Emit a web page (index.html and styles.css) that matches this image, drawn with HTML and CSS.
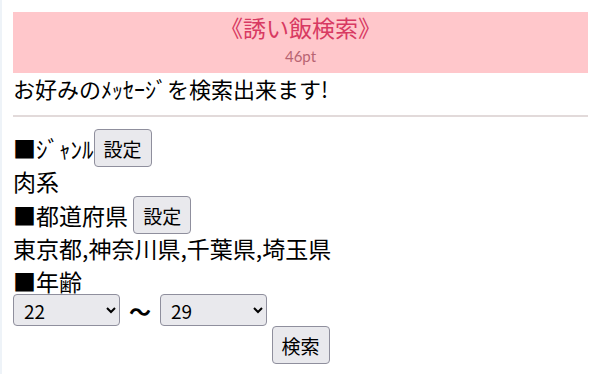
FILE: index.html
```html
<!DOCTYPE html>
<html lang="ja">
<head>
    <meta charset="UTF-8">
    <meta name="viewport" content="width=device-width, initial-scale=1.0">
    <title>誘い飯検索</title>
    <link rel="stylesheet" href="styles.css">
</head>
<body>
    <div class="page">
        <div class="header">
            <div class="title">《誘い飯検索》</div>
            <div class="points">46pt</div>
        </div>
        <p class="lead">お好みのﾒｯｾｰｼﾞを検索出来ます!</p>
        <hr class="rule">

        <form class="search" onsubmit="return false;">
            <div class="row row-btn">■ｼﾞｬﾝﾙ<button type="button" class="btn">設定</button></div>
            <div class="row row-genre">肉系</div>
            <div class="row row-btn">■都道府県 <button type="button" class="btn">設定</button></div>
            <div class="row row-pref">東京都,神奈川県,千葉県,埼玉県</div>
            <div class="row row-age">■年齢</div>
            <div class="ages">
                <select class="age">
                    <option>18</option>
                    <option>20</option>
                    <option selected>22</option>
                    <option>25</option>
                </select>
                <span class="tilde">〜</span>
                <select class="age">
                    <option>25</option>
                    <option selected>29</option>
                    <option>35</option>
                </select>
            </div>
            <div class="submit">
                <button type="submit" class="btn">検索</button>
            </div>
        </form>
    </div>
</body>
</html>
```

FILE: styles.css
```css
* {
    margin: 0;
    padding: 0;
    box-sizing: border-box;
}

body {
    font-family: "Noto Sans CJK JP", "Noto Sans", sans-serif;
    background: white;
    color: #000;
    border-left: 2px solid #eef3f8;
    min-height: 100vh;
}

.page {
    padding: 12px 10px 0 11px;
}

.header {
    background: #ffc7cb;
    height: 61px;
    text-align: center;
    padding-top: 1px;
}

.header .title {
    color: #d83a62;
    font-size: 23px;
    line-height: 28px;
}

.header .points {
    color: #b86472;
    font-family: Lato, "Noto Sans", sans-serif;
    font-size: 15px;
    line-height: 20px;
    margin-top: 5px;
}

.lead {
    font-size: 22px;
    line-height: 30px;
}

.rule {
    border: none;
    height: 2px;
    background: #e2dada;
    margin-top: 12px;
}

.search {
    font-size: 23px;
    padding-top: 12px;
}

.row {
    line-height: 32px;
}

.row-btn {
    display: flex;
    align-items: center;
    white-space: pre;
    height: 38px;
}

.row-genre {
    line-height: 29px;
}

.row-pref {
    line-height: 28px;
}

.row-age {
    line-height: 38px;
    margin-bottom: -6px;
}

.btn {
    font-family: inherit;
    font-size: 19px;
    width: 58px;
    height: 38px;
    background: #e9e9ed;
    border: 1px solid #8f8f9d;
    border-radius: 4px;
    color: #000;
    cursor: pointer;
}

.ages {
    display: flex;
    align-items: center;
    gap: 9px;
}

.age {
    font-family: inherit;
    font-size: 19px;
    width: 107px;
    height: 32px;
    background: #e9e9ed;
    border: 1px solid #8f8f9d;
    border-radius: 4px;
    padding-left: 6px;
    color: #000;
}

.tilde {
    font-size: 22px;
    font-weight: bold;
    width: 22px;
    text-align: center;
}

.submit {
    display: flex;
    justify-content: center;
}
```
